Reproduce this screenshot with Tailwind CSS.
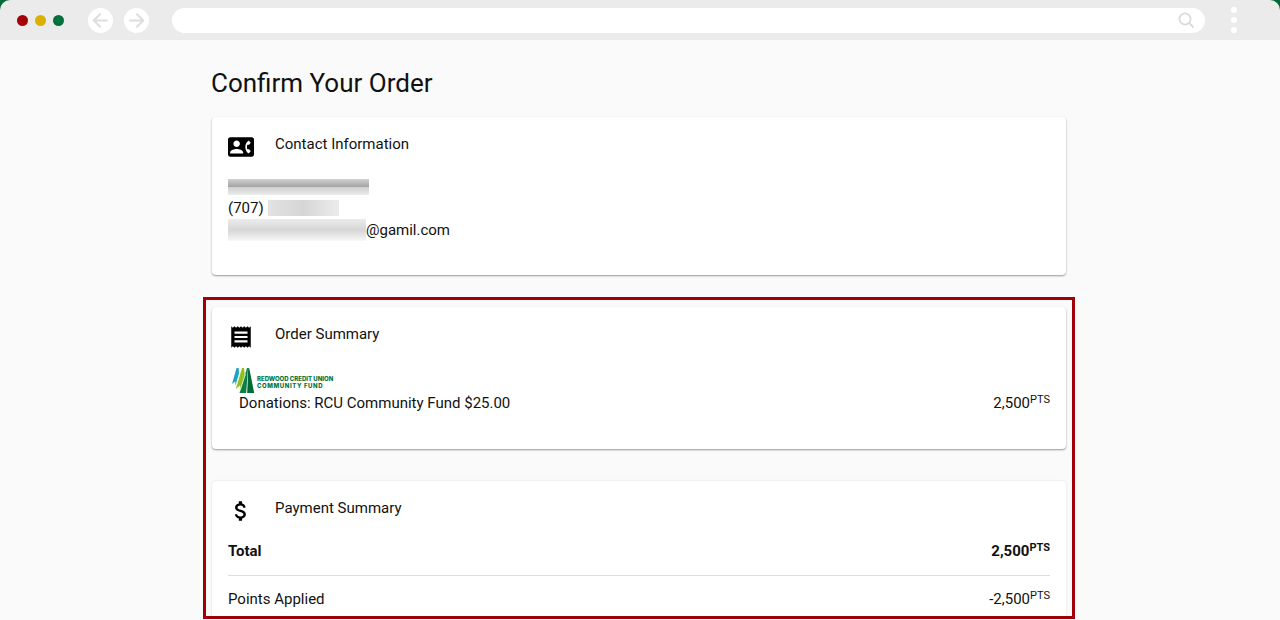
<!DOCTYPE html>
<html lang="en">
<head>
    <meta charset="UTF-8">
    <meta name="viewport" content="width=device-width, initial-scale=1.0">
    <title>Confirm Your Order</title>
    <script src="https://cdn.jsdelivr.net/npm/@tailwindcss/browser@4"></script>
</head>
<body class="bg-[#fafafa] text-[#111111] font-['Roboto',sans-serif] text-[15px] leading-[22px]">
    <!-- Browser bar -->
    <div class="bg-[#006938]">
        <header class="flex items-center h-10 pl-[17px] pr-[43px] bg-[#ebebeb] rounded-t-[10px]">
            <div class="flex gap-[7px]">
                <span class="size-[11px] rounded-full bg-[#a50008]"></span>
                <span class="size-[11px] rounded-full bg-[#dcb000]"></span>
                <span class="size-[11px] rounded-full bg-[#00703c]"></span>
            </div>
            <nav class="flex gap-[11px] ml-6">
                <button type="button" class="size-[25px] rounded-full bg-white" aria-label="Back">
                    <svg class="size-[25px]" viewBox="0 0 25 25" fill="none" stroke="#dedede" stroke-width="2" stroke-linecap="round" stroke-linejoin="round"><path d="M19 12.5H6M12 6.2 5.8 12.5l6.2 6.3"/></svg>
                </button>
                <button type="button" class="size-[25px] rounded-full bg-white" aria-label="Forward">
                    <svg class="size-[25px]" viewBox="0 0 25 25" fill="none" stroke="#dedede" stroke-width="2" stroke-linecap="round" stroke-linejoin="round"><path d="M6 12.5h13M13 6.2l6.2 6.3-6.2 6.3"/></svg>
                </button>
            </nav>
            <form class="flex flex-1 items-center h-[25px] ml-[23px] pr-[10px] rounded-full bg-white">
                <input type="text" class="flex-1 min-w-0 px-3 outline-none text-sm" aria-label="Address">
                <button type="button" class="size-[18px]" aria-label="Search">
                    <svg class="size-[18px]" viewBox="0 0 18 18" fill="none" stroke="#dadada" stroke-width="1.8" stroke-linecap="round"><circle cx="8" cy="8" r="5.6"/><path d="m12.2 12.2 4 3.800"/></svg>
                </button>
            </form>
            <button type="button" class="flex flex-col gap-1 ml-[26px]" aria-label="Menu">
                <span class="size-[6px] rounded-full bg-white"></span>
                <span class="size-[6px] rounded-full bg-white"></span>
                <span class="size-[6px] rounded-full bg-white"></span>
            </button>
        </header>
    </div>

    <main class="max-w-[874px] mx-auto pr-0.5 pt-[27px]">
        <h1 class="px-2 text-[26px] leading-8">Confirm Your Order</h1>

        <section class="mx-[9px] mt-[18px] px-4 pt-4 pb-[34px] rounded bg-white shadow-[0_1px_2px_rgba(0,0,0,0.4)]">
            <div class="flex gap-[21px]">
                <svg class="size-[26px] mt-px" viewBox="0 0 24 24" fill="#000000"><path d="M22 3H2C.9 3 0 3.9 0 5v14c0 1.100.9 2 2 2h20c1.100 0 1.990-.9 1.990-2L24 5c0-1.100-.9-2-2-2zM8 6c1.660 0 3 1.340 3 3s-1.340 3-3 3-3-1.340-3-3 1.340-3 3-3zm6 12H2v-1c0-2 4-3.100 6-3.100s6 1.100 6 3.100v1zm3.850-4h1.640L21 16l-1.990 1.990c-1.310-.98-2.280-2.380-2.730-3.990-.18-.64-.28-1.310-.28-2s.1-1.360.28-2c.45-1.620 1.420-3.010 2.730-3.990L21 8l-1.510 2h-1.640c-.22.63-.35 1.300-.35 2s.13 1.370.35 2z"/></svg>
                <h2>Contact Information</h2>
            </div>
            <!-- Personal details are masked -->
            <div class="mt-[15px]">
                <div class="flex items-end h-[22px] pb-0.5">
                    <span class="flex flex-col w-[141px] h-4">
                        <span class="flex-1 bg-linear-to-b from-[#d2d2d2] to-[#a2a2a2]"></span>
                        <span class="flex-1 bg-linear-to-b from-[#cfcfcf] to-[#ececec]"></span>
                    </span>
                </div>
                <div class="flex items-center gap-1">
                    <span>(707)</span>
                    <span class="w-[71px] h-4 bg-linear-to-r from-[#e2e2e2] via-[#d6d6d6] to-[#ececec]"></span>
                </div>
                <div class="flex items-center">
                    <span class="w-[138px] h-[22px] bg-linear-to-b from-[#ececec] via-[#d6d6d6] to-[#f8f8f8]"></span>
                    <span>@gamil.com</span>
                </div>
            </div>
        </section>

        <div class="mt-[22px] px-[6px] pt-[7px] border-3 border-[#a00008]">
            <section class="px-4 pt-4 pb-[35px] rounded bg-white shadow-[0_1px_2px_rgba(0,0,0,0.4)]">
                <div class="flex gap-[21px]">
                    <svg class="size-[26px] mt-px" viewBox="0 0 24 24" fill="#000000"><path d="M18 17H6v-2h12v2zm0-4H6v-2h12v2zm0-4H6V7h12v2zM3 22l1.500-1.500L6 22l1.500-1.500L9 22l1.500-1.500L12 22l1.500-1.500L15 22l1.500-1.500L18 22l1.500-1.500L21 22V2l-1.500 1.500L18 2l-1.500 1.500L15 2l-1.500 1.500L12 2l-1.500 1.500L9 2 7.500 3.500 6 2 4.500 3.500 3 2v20z"/></svg>
                    <h2>Order Summary</h2>
                </div>
                <svg class="w-[104px] h-[26px] mt-4 ml-[3px] overflow-visible" viewBox="0 0 104 26" role="img" aria-label="Redwood Credit Union Community Fund">
                    <path fill="#1ba5bd" d="M5.500 2H7.600L8.200 9 4.600 20 4.200 15.500 1 18z"/>
                    <path fill="#93c01f" d="M11 2h2.100l.8 9L9.600 25 9 19.500 4.800 23z"/>
                    <path fill="#0a7f43" d="M16 2h1L15.200 27H8.500z"/>
                    <path fill="#006938" d="M17.200 2h1L23.200 27H16.200z"/>
                    <path fill="none" stroke="#ffffff" stroke-width=".8" d="M14.500 8 9 24.500M8.600 7 4.500 20.500"/>
                    <g class="font-['Inter',sans-serif] text-[6px] font-extrabold" fill="#00743c">
                        <text x="26" y="15">REDWOOD CREDIT UNION</text>
                        <text x="26" y="22" class="tracking-widest">COMMUNITY FUND</text>
                    </g>
                </svg>
                <div class="flex justify-between pl-[11px]">
                    <p>Donations: RCU Community Fund $25.00</p>
                    <p>2,500<sup class="text-[11px]">PTS</sup></p>
                </div>
            </section>

            <section class="mt-8 px-4 pt-4 pb-[6px] rounded-t bg-white shadow-[0_0_2px_rgba(0,0,0,0.15)]">
                <div class="flex gap-[21px]">
                    <svg class="size-[26px] mt-px" viewBox="0 0 24 24" fill="#000000"><path d="M11.800 10.900c-2.270-.59-3-1.200-3-2.150 0-1.090 1.010-1.850 2.700-1.850 1.780 0 2.440.85 2.500 2.100h2.210c-.07-1.720-1.120-3.300-3.210-3.810V3h-3v2.160c-1.940.42-3.500 1.680-3.500 3.610 0 2.310 1.910 3.460 4.700 4.130 2.500.6 3 1.480 3 2.410 0 .69-.49 1.790-2.700 1.790-2.060 0-2.870-.92-2.980-2.100h-2.200c.12 2.190 1.760 3.420 3.680 3.830V21h3v-2.150c1.950-.37 3.500-1.500 3.500-3.550 0-2.840-2.430-3.810-4.700-4.400z"/></svg>
                    <h2>Payment Summary</h2>
                </div>
                <dl class="mt-4">
                    <div class="flex justify-between pb-[13px] border-b border-[#dddddd] font-bold">
                        <dt>Total</dt>
                        <dd>2,500<sup class="text-[11px]">PTS</sup></dd>
                    </div>
                    <div class="flex justify-between pt-3">
                        <dt>Points Applied</dt>
                        <dd>-2,500<sup class="text-[11px]">PTS</sup></dd>
                    </div>
                </dl>
            </section>
        </div>
    </main>
</body>
</html>
